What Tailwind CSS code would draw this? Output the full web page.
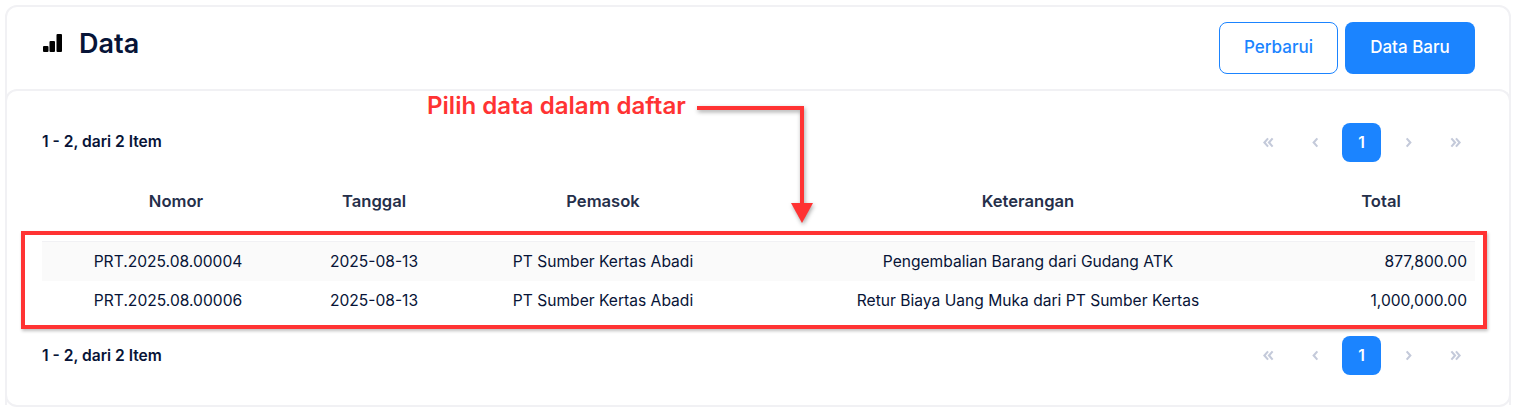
<!DOCTYPE html>
<html lang="en">
<head>
    <meta charset="UTF-8">
    <title>Data</title>
    <script src="https://cdn.jsdelivr.net/npm/@tailwindcss/browser@4"></script>
</head>
<body class="bg-white font-['Inter',sans-serif] text-[#071437] overflow-hidden">
    <div class="relative w-[1520px] h-[412px] pt-[5px] pl-[5px]">
        <div class="w-[1506px] h-[402px] flex flex-col border-2 border-[#f1f1f4] rounded-[12px] bg-white">
            <div class="h-[82px] flex justify-between pl-[36px] pr-[34px] shrink-0">
                <div class="flex items-center gap-[16px] h-[72px]">
                    <svg class="w-[20px] h-[20px] text-black mt-[2px]" viewBox="0 0 20 20" fill="currentColor">
                        <rect x="0" y="12" width="5.500" height="6" rx="1"/>
                        <rect x="6.500" y="7" width="5.500" height="11" rx="1"/>
                        <rect x="13.500" y="0" width="5.500" height="18" rx="1"/>
                    </svg>
                    <h1 class="text-[27px] font-semibold leading-none">Data</h1>
                </div>
                <div class="flex gap-[7px] pt-[15px]">
                    <button class="w-[119px] h-[52px] border border-[#1b84ff] rounded-[8px] text-[#1b84ff] text-[17px] font-medium">Perbarui</button>
                    <button class="w-[130px] h-[52px] bg-[#1b84ff] rounded-[8px] text-white text-[17px] font-medium">Data Baru</button>
                </div>
            </div>
            <div class="flex-1 -mx-[2px] border-2 border-b-0 border-[#f1f1f4] rounded-t-[12px] pl-[35px] pr-[34px] pt-[32px]">
                <div class="flex justify-between items-center h-[39px]">
                    <span class="text-[15.6px] font-semibold -mt-[1px]">1 - 2, dari 2 Item</span>
                    <div class="flex items-center text-[#c4cada]">
                        <span class="w-[40px] h-[39px] flex items-center justify-center">
                            <svg class="w-[11px] h-[11px]" viewBox="0 0 12 12" fill="none" stroke="currentColor" stroke-width="2.300"><path d="M5.500 1.500 1.500 6l4 4.500M10.500 1.500 6.500 6l4 4.500"/></svg>
                        </span>
                        <span class="w-[54px] h-[39px] flex items-center justify-center">
                            <svg class="w-[11px] h-[11px]" viewBox="0 0 12 12" fill="none" stroke="currentColor" stroke-width="2.300"><path d="M8 1.500 4 6l4 4.500"/></svg>
                        </span>
                        <span class="w-[39px] h-[39px] flex items-center justify-center bg-[#1b84ff] rounded-[8px] text-white text-[15.6px] font-semibold">1</span>
                        <span class="w-[54px] h-[39px] flex items-center justify-center">
                            <svg class="w-[11px] h-[11px]" viewBox="0 0 12 12" fill="none" stroke="currentColor" stroke-width="2.300"><path d="M4 1.500 8 6l-4 4.500"/></svg>
                        </span>
                        <span class="w-[40px] h-[39px] flex items-center justify-center">
                            <svg class="w-[11px] h-[11px]" viewBox="0 0 12 12" fill="none" stroke="currentColor" stroke-width="2.300"><path d="M1.500 1.500 5.500 6l-4 4.500M6.500 1.500 10.500 6l-4 4.500"/></svg>
                        </span>
                    </div>
                </div>
                <table class="w-[1433px] table-fixed mt-[18px] text-[15.6px]">
                    <thead>
                        <tr class="h-[61px] text-[16.6px] text-[#252f4a] border-b border-[#f1f1f4]">
                            <th class="w-[252px] pl-[16px] pb-[17px] font-semibold">Nomor</th>
                            <th class="w-[160px] pb-[17px] font-semibold">Tanggal</th>
                            <th class="w-[298px] pb-[17px] font-semibold">Pemasok</th>
                            <th class="w-[552px] pb-[17px] font-semibold">Keterangan</th>
                            <th class="w-[171px] pr-[17px] pb-[17px] font-semibold">Total</th>
                        </tr>
                    </thead>
                    <tbody>
                        <tr class="h-[40px] bg-[#fafafa] text-center">
                            <td>PRT.2025.08.00004</td>
                            <td>2025-08-13</td>
                            <td>PT Sumber Kertas Abadi</td>
                            <td>Pengembalian Barang dari Gudang ATK</td>
                            <td class="text-right pr-[8px]">877,800.00</td>
                        </tr>
                        <tr class="h-[40px] text-center">
                            <td>PRT.2025.08.00006</td>
                            <td>2025-08-13</td>
                            <td>PT Sumber Kertas Abadi</td>
                            <td>Retur Biaya Uang Muka dari PT Sumber Kertas</td>
                            <td class="text-right pr-[8px]">1,000,000.00</td>
                        </tr>
                    </tbody>
                </table>
                <div class="flex justify-between items-center h-[39px] mt-[15px]">
                    <span class="text-[15.6px] font-semibold mt-[1px]">1 - 2, dari 2 Item</span>
                    <div class="flex items-center text-[#c4cada]">
                        <span class="w-[40px] h-[39px] flex items-center justify-center">
                            <svg class="w-[11px] h-[11px]" viewBox="0 0 12 12" fill="none" stroke="currentColor" stroke-width="2.300"><path d="M5.500 1.500 1.500 6l4 4.500M10.500 1.500 6.500 6l4 4.500"/></svg>
                        </span>
                        <span class="w-[54px] h-[39px] flex items-center justify-center">
                            <svg class="w-[11px] h-[11px]" viewBox="0 0 12 12" fill="none" stroke="currentColor" stroke-width="2.300"><path d="M8 1.500 4 6l4 4.500"/></svg>
                        </span>
                        <span class="w-[39px] h-[39px] flex items-center justify-center bg-[#1b84ff] rounded-[8px] text-white text-[15.6px] font-semibold">1</span>
                        <span class="w-[54px] h-[39px] flex items-center justify-center">
                            <svg class="w-[11px] h-[11px]" viewBox="0 0 12 12" fill="none" stroke="currentColor" stroke-width="2.300"><path d="M4 1.500 8 6l-4 4.500"/></svg>
                        </span>
                        <span class="w-[40px] h-[39px] flex items-center justify-center">
                            <svg class="w-[11px] h-[11px]" viewBox="0 0 12 12" fill="none" stroke="currentColor" stroke-width="2.300"><path d="M1.500 1.500 5.500 6l-4 4.500M6.500 1.500 10.500 6l-4 4.500"/></svg>
                        </span>
                    </div>
                </div>
            </div>
        </div>

        <!-- annotation -->
        <div class="absolute left-[21px] top-[231px] w-[1466px] h-[98px] border-[4px] border-[#ff3333] shadow-[1px_2px_3px_rgba(0,0,0,0.25)]"></div>
        <span class="absolute left-[427px] top-[91px] text-[24.1px] leading-[30px] font-semibold text-[#ff3333]">Pilih data dalam daftar</span>
        <svg class="absolute left-[690px] top-[100px] drop-shadow-[1px_2px_2px_rgba(0,0,0,0.35)]" width="130" height="126" viewBox="0 0 130 126" fill="#ff3333">
            <path d="M7 6h107v97.500h-4V10H7z"/>
            <path d="M101 103h22l-11 20z"/>
        </svg>
    </div>
</body>
</html>
